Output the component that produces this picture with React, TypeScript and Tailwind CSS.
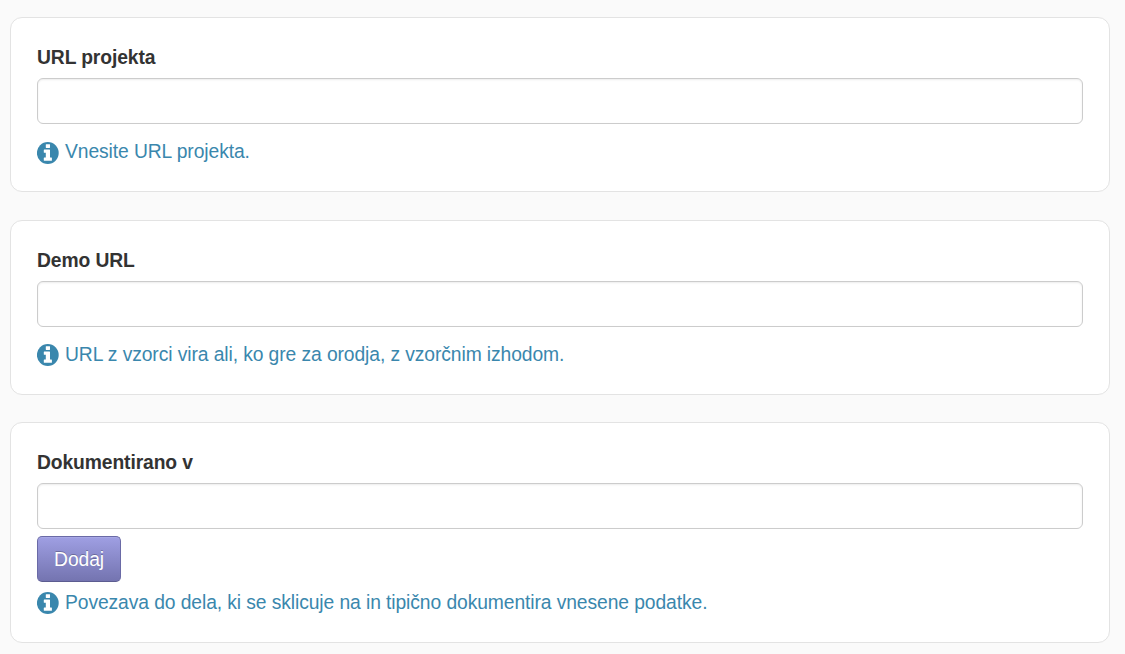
function InfoIcon({ className }: { className: string }) {
  return (
    <svg viewBox="0 0 22 22" aria-hidden="true" className={`mr-[6px] size-[22px] shrink-0 ${className}`}>
      <circle cx="10.8" cy="11" r="10.9" fill="#3a87ad" />
      <g fill="#ffffff">
        <rect x="8.8" y="2.2" width="4.2" height="3.8" rx="0.4" />
        <path d="M7.3 7.6H12.5a.5.5 0 0 1 .5.5V15.6h1.4a.5.5 0 0 1 .5.5v2.1a.5.5 0 0 1-.5.5H7.3a.5.5 0 0 1-.5-.5v-2.1a.5.5 0 0 1 .5-.5H8.8V10.7H7.3a.5.5 0 0 1-.5-.5V8.1a.5.5 0 0 1 .5-.5z" />
      </g>
    </svg>
  );
}

type CardProps = { label: string; hint: string; add?: boolean; className: string; iconClassName: string };

function Card({ label, hint, add, className, iconClassName }: CardProps) {
  return (
    <section className={`rounded-xl border border-[#e3e3e3] bg-white px-[26px] pt-[26px] ${className}`}>
      <label className="block h-[34px] pt-[2px] text-[19.3px] leading-[24px] font-bold tracking-[-0.11px] text-[#333333]">{label}</label>
      <input className="block h-[46px] w-full rounded-[6px] border border-[#cccccc] bg-white px-2 shadow-[inset_0_1px_2px_rgba(0,0,0,0.075)] outline-none" />
      {add && (
        <button className="mt-[7px] block h-[46px] w-[84px] rounded-[5px] border border-[#6a6aa6] border-b-[#5c5c90] bg-linear-to-b from-[#9f9fe3] to-[#7474b0] pt-[2px] text-[19.3px] leading-[42px] tracking-[-0.095px] text-white shadow-[inset_0_1px_0_rgba(255,255,255,0.1)] [text-shadow:0_-1px_0_rgba(0,0,0,0.25)]">
          Dodaj
        </button>
      )}
      <p className={`flex items-start text-[19.3px] leading-[28px] tracking-[-0.095px] whitespace-nowrap text-[#3a87ad] ${add ? "mt-[7px]" : "mt-[14px]"}`}>
        <InfoIcon className={iconClassName} />
        <span>{hint}</span>
      </p>
    </section>
  );
}

export default function App() {
  return (
    <main className="h-[654px] overflow-hidden bg-[#fafafa] pt-[17px] pr-[15px] pl-[10px] font-['Liberation_Sans',Arial,sans-serif]">
      <Card className="h-[175px]" iconClassName="mt-[4px]" label="URL projekta" hint="Vnesite URL projekta." />
      <Card className="mt-[28px] h-[175px]" iconClassName="mt-[3px]" label="Demo URL" hint="URL z vzorci vira ali, ko gre za orodja, z vzorčnim izhodom." />
      <Card className="mt-[27px] h-[221px]" iconClassName="mt-[3px]" label="Dokumentirano v" hint="Povezava do dela, ki se sklicuje na in tipično dokumentira vnesene podatke." add />
    </main>
  );
}
